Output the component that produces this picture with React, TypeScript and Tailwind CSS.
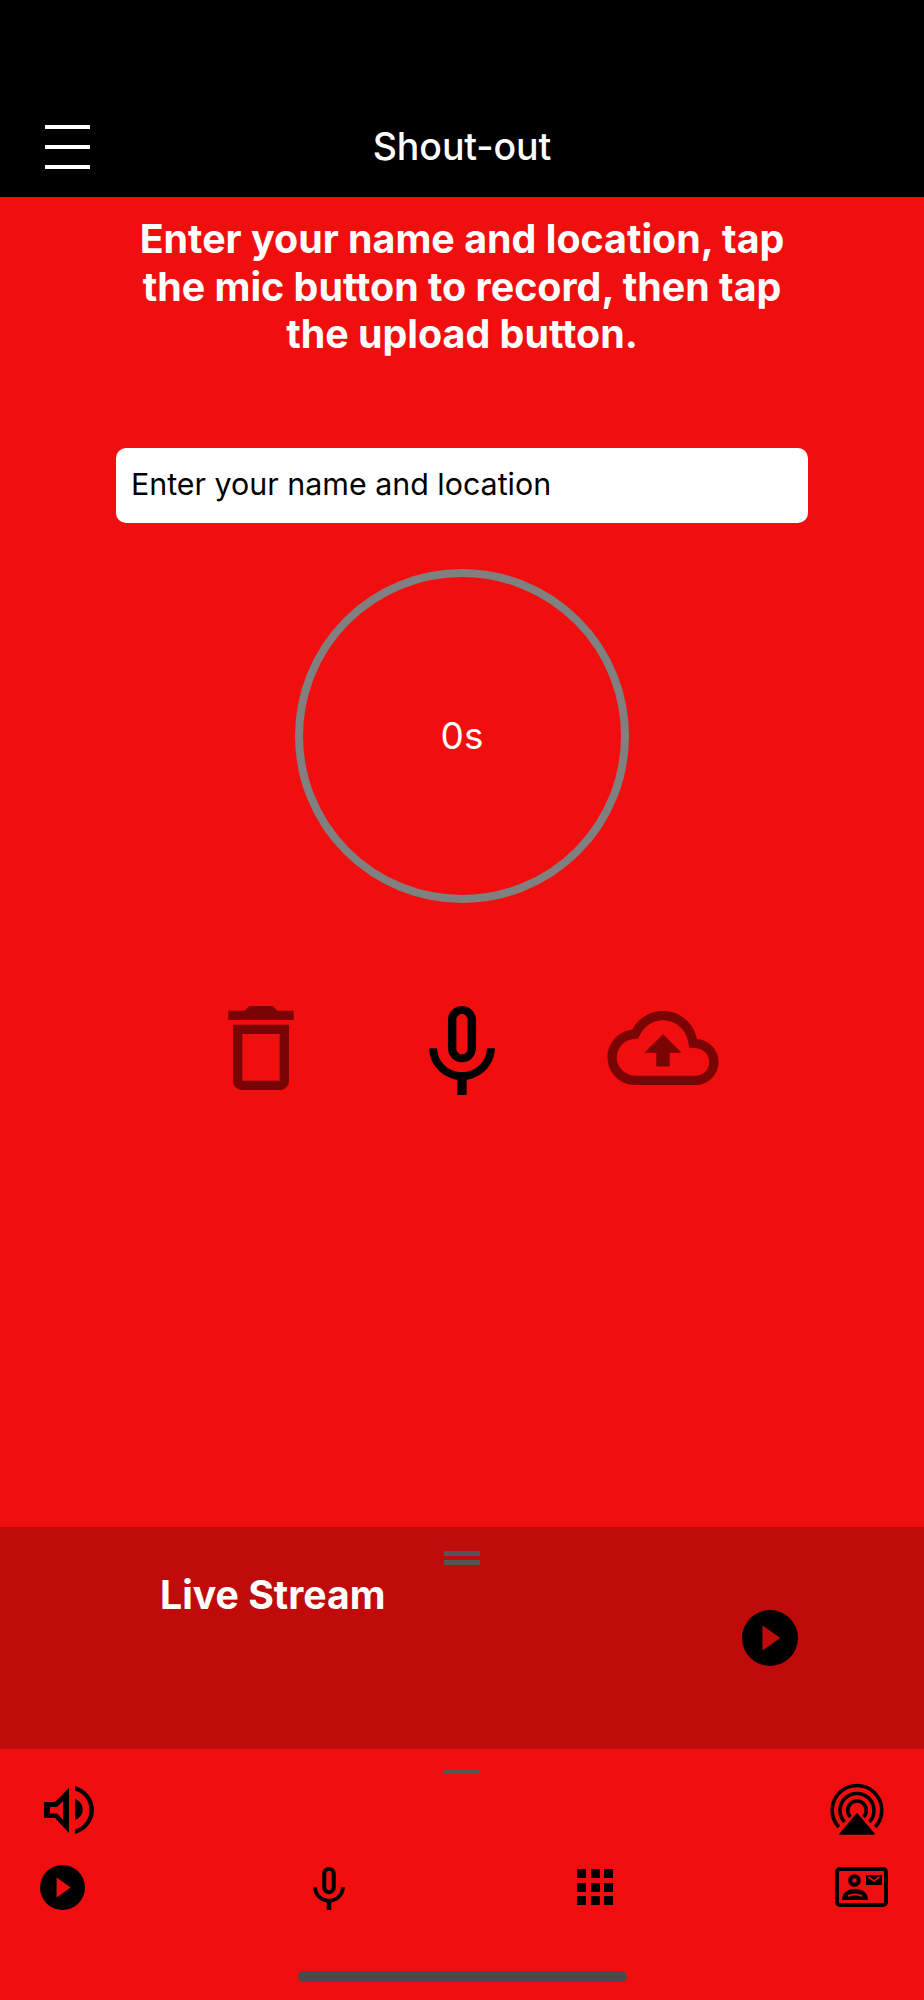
import React from "react";

const font = { fontFamily: '"Inter", "Liberation Sans", sans-serif' };

const MIC =
  "M12 14c1.66 0 2.99-1.34 2.99-3L15 5c0-1.66-1.34-3-3-3S9 3.34 9 5v6c0 1.66 1.34 3 3 3zm-1.2-9.1c0-.66.54-1.2 1.2-1.2.66 0 1.2.54 1.2 1.2l-.01 6.2c0 .66-.53 1.2-1.19 1.2-.66 0-1.2-.54-1.2-1.2V4.9zm6.5 6.1c0 3-2.54 5.1-5.3 5.1S6.7 14 6.7 11H5c0 3.41 2.72 6.23 6 6.72V21h2v-3.28c3.28-.48 6-3.3 6-6.72h-1.7z";
const TRASH =
  "M6 19c0 1.1.9 2 2 2h8c1.1 0 2-.9 2-2V7H6v12zM8 9h8v10H8V9zm7.5-5l-1-1h-5l-1 1H5v2h14V4z";
const CLOUD =
  "M19.35 10.04C18.67 6.59 15.64 4 12 4 9.11 4 6.6 5.64 5.35 8.04 2.34 8.36 0 10.91 0 14c0 3.31 2.69 6 6 6h13c2.76 0 5-2.24 5-5 0-2.64-2.05-4.78-4.65-4.96zM19 18H6c-2.21 0-4-1.79-4-4 0-2.05 1.53-3.76 3.56-3.97l1.07-.11.5-.95C8.08 7.14 9.94 6 12 6c2.62 0 4.88 1.86 5.39 4.43l.3 1.5 1.53.11c1.56.1 2.78 1.41 2.78 2.96 0 1.65-1.35 3-3 3zM8 13h2.55v3h2.9v-3H16l-4-4z";

function Play({ size, tri, triH, fill }: { size: number; tri: number; triH: number; fill: string }) {
  const c = size / 2;
  const x0 = c - tri * 0.42;
  return (
    <svg width={size} height={size} viewBox={`0 0 ${size} ${size}`} className="block shrink-0">
      <circle cx={c} cy={c} r={c} fill="#000" />
      <path d={`M${x0} ${c - triH / 2}L${x0 + tri} ${c}L${x0} ${c + triH / 2}Z`} fill={fill} />
    </svg>
  );
}

export default function App() {
  return (
    <div style={font} className="flex h-[2000px] w-[924px] flex-col overflow-hidden bg-[#f10e0e]">
      <header className="grid h-[197px] shrink-0 grid-cols-[1fr_auto_1fr] items-start bg-black pt-[124px]">
        <div className="flex flex-col gap-[16px] pt-[0.5px] pl-[45px]">
          <div className="h-[4px] w-[45px] bg-white blur-[0.6px]" />
          <div className="h-[4px] w-[45px] bg-white blur-[0.6px]" />
          <div className="h-[4px] w-[45px] bg-white blur-[0.6px]" />
        </div>
        <div className="pt-[2px] text-center text-[37.5px] leading-[42px] font-medium tracking-[-0.1px] text-white">
          Shout-out
        </div>
        <div />
      </header>

      <main className="flex flex-1 flex-col items-center">
        <p className="mt-[19px] w-[760px] text-center text-[39.4px] leading-[47.5px] font-bold text-white">
          Enter your name and location, tap
          <br />
          the mic button to record, then tap
          <br />
          the upload button.
        </p>

        <div className="mt-[89px] flex h-[75px] w-[692px] items-center rounded-[10px] bg-white pl-[15px] text-[30.4px] text-black">
          Enter your name and location
        </div>

        <div className="mt-[46px] flex h-[334px] w-[334px] items-center justify-center rounded-full border-[8px] border-[#808080] text-[37px] text-white">
          0s
        </div>

        <div className="mt-[103px] flex w-full items-start pl-[228px]">
          <svg width="66" height="84" viewBox="5 3 14 18" className="block shrink-0">
            <path d={TRASH} fill="#7a0404" />
          </svg>
          <svg width="66" height="89" viewBox="5 2 14 19" className="ml-[135px] block shrink-0">
            <path d={MIC} fill="#000" />
          </svg>
          <svg width="112" height="74" viewBox="0 4 24 16" className="mt-[5px] ml-[112px] block shrink-0">
            <path d={CLOUD} fill="#7a0404" />
          </svg>
        </div>
      </main>

      <section className="flex h-[222px] shrink-0 flex-col bg-[#bf0b09]">
        <div className="mt-[24px] flex flex-col items-center gap-[4px]">
          <div className="h-[5px] w-[36px] bg-[#555555]" />
          <div className="h-[5px] w-[36px] bg-[#555555]" />
        </div>
        <div className="flex items-start pl-[160px]">
          <div className="mt-[8px] w-[224px] text-[39.2px] leading-[44px] font-bold whitespace-nowrap text-white">
            Live Stream
          </div>
          <div className="mt-[45px] ml-[358px]">
            <Play size={56} tri={18} triH={25} fill="#bf0b09" />
          </div>
        </div>
      </section>

      <footer className="flex h-[251px] shrink-0 flex-col">
        <div className="mt-[21px] flex justify-center">
          <div className="h-[4px] w-[36px] bg-[#555555]" />
        </div>

        <div className="mt-[9px] flex items-start justify-between pr-[40px] pl-[44px]">
          <svg width="50" height="50" viewBox="0 0 50 50" className="mt-[3px] block">
            <path
              fillRule="evenodd"
              d="M0 16H11L25 2V47L11 32H0ZM6 21V27.5H13L19 34V15L13 21Z"
              fill="#000"
            />
            <path d="M31 13C36 15 38.7 19 38.7 23.5C38.7 28 36 32 31 34Z" fill="#000" />
            <path d="M31 0C42 3 50 13 50 24C50 35 42 45 31 48V43.5C40 41 45.5 33 45.5 24C45.5 15 40 7 31 4.5Z" fill="#000" />
          </svg>
          <svg width="54" height="52" viewBox="0 0 54 52" className="block">
            <g fill="none" stroke="#000" strokeWidth="3.6">
              <path d="M8.7 44A24.8 24.8 0 1 1 45.3 44" />
              <path d="M14.5 39A17 17 0 1 1 39.5 39" />
              <path d="M20.5 34A9.3 9.3 0 1 1 33.5 34" />
            </g>
            <path d="M27 31L44 51H10Z" fill="#000" stroke="#000" strokeWidth="1.5" strokeLinejoin="round" />
          </svg>
        </div>

        <div className="mt-[31px] flex items-start pl-[40px]">
          <div className="mt-[-2px]">
            <Play size={45} tri={14} triH={20} fill="#f10e0e" />
          </div>
          <svg width="32" height="43" viewBox="5 2 14 19" className="ml-[228px] block shrink-0">
            <path d={MIC} fill="#000" />
          </svg>
          <div className="mt-[2px] ml-[232px] grid grid-cols-[repeat(3,9px)] gap-[4.5px]">
            {Array.from({ length: 9 }).map((_, i) => (
              <div key={i} className="h-[9px] w-[9px] bg-black" />
            ))}
          </div>
          <svg width="53" height="40" viewBox="0 0 53 40" className="ml-[222px] block shrink-0">
            <rect x="2" y="2" width="49" height="36" rx="3" fill="none" stroke="#000" strokeWidth="4" />
            <circle cx="19.5" cy="13.5" r="4.3" fill="none" stroke="#000" strokeWidth="4" />
            <path d="M7 33C7 26 12 22 20 22C28 22 33 26 33 33Z" fill="#000" />
            <path d="M13 29Q20 26 27 29" fill="none" stroke="#f10e0e" strokeWidth="2" />
            <rect x="31" y="8" width="16" height="10" fill="#000" />
            <path d="M33.5 10L39 14L44.5 10" fill="none" stroke="#f10e0e" strokeWidth="1.6" />
          </svg>
        </div>

        <div className="mt-auto mb-[18px] flex justify-center">
          <div className="h-[11px] w-[329px] rounded-full bg-[#4a4a4a]" />
        </div>
      </footer>
    </div>
  );
}
